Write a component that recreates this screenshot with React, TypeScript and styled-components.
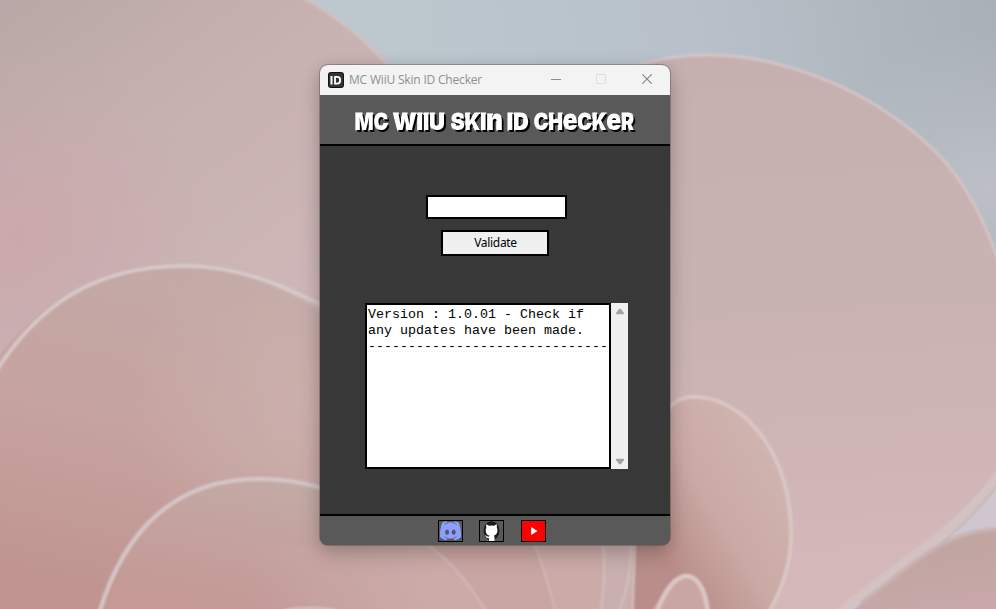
import React from "react";
import styled, { createGlobalStyle } from "styled-components";

const GlobalStyle = createGlobalStyle`
  * { box-sizing: border-box; }
  html, body { margin: 0; padding: 0; overflow: hidden; }
`;

const Desktop = styled.div`
  position: relative;
  width: 996px;
  height: 609px;
  padding: 65px 0 0 320px;
  overflow: hidden;
`;

const WallpaperSvg = styled.svg`
  position: absolute;
  inset: 0;
  display: block;
`;

const Window = styled.main`
  position: relative;
  display: flex;
  flex-direction: column;
  width: 350px;
  height: 480px;
  border-radius: 8px;
  overflow: hidden;
  background: #383838;
`;

const WindowShadow = styled.div`
  position: relative;
  width: 350px;
  height: 480px;
  border-radius: 8px;
  box-shadow: 0 0 0 1px rgba(70, 60, 60, 0.35), 0 9px 22px rgba(0, 0, 0, 0.2), 0 2px 14px rgba(0, 0, 0, 0.1);
`;

const TitleBar = styled.header`
  display: flex;
  align-items: center;
  height: 30px;
  flex: none;
  padding-left: 8px;
  background: #f3f3f3;
`;

const Caption = styled.span`
  flex: 1;
  margin-left: 5px;
  font: 12px/16px "Open Sans", sans-serif;
  letter-spacing: -0.19px;
  color: #8f8f8f;
  white-space: nowrap;
`;

const CaptionButtons = styled.div`
  display: flex;
  align-items: center;
`;

const CaptionButton = styled.button<{ $shift?: number }>`
  display: grid;
  place-items: center;
  width: 46px;
  height: 30px;
  padding: 0 0 2px ${(p) => p.$shift ?? 0}px;
  border: 0;
  background: none;
`;

const Banner = styled.div`
  display: flex;
  justify-content: center;
  height: 51px;
  flex: none;
  padding-top: 10px;
  background: #595959;
  border-bottom: 2px solid #000;
`;

const Heading = styled.h1`
  display: flex;
  width: 280px;
  margin: 0;
  font: 900 23.5px/34px Inter, sans-serif;
  color: #fff;
  -webkit-text-stroke: 1.1px #fff;
  paint-order: stroke fill;
  text-shadow: 1px 1px 0 #000, 2px 2px 0 #000;
`;

const Word = styled.span<{ $w: number; $scale: number }>`
  flex: none;
  width: ${(p) => p.$w}px;
  transform: scaleX(${(p) => p.$scale});
  transform-origin: 0 50%;
  white-space: nowrap;
`;

const Unicase = styled.span`
  font-size: 29px;
  line-height: 20px;
`;

const Body = styled.section`
  display: flex;
  flex-direction: column;
  align-items: center;
  flex: 1;
  padding-top: 49px;
`;

const IdInput = styled.input`
  width: 141px;
  height: 24px;
  margin-left: 3px;
  padding: 0 3px;
  border: 2px solid #000;
  border-radius: 0;
  background: #fff;
  outline: none;
`;

const ValidateButton = styled.button`
  width: 108px;
  height: 26px;
  margin-top: 11px;
  padding: 0 0 1px 1px;
  border: 2px solid #000;
  border-radius: 0;
  background: #f0f0f0;
  color: #000;
  font: 12px/16px "Noto Sans", sans-serif;
  letter-spacing: -0.3px;
`;

const LogArea = styled.div`
  display: flex;
  width: 263px;
  height: 166px;
  margin: 47px 0 0 3px;
`;

const LogText = styled.pre`
  width: 246px;
  margin: 0;
  padding: 2px 0 0 1px;
  border: 2px solid #000;
  background: #fff;
  color: #000;
  font: 13.333px/16px "Liberation Mono", monospace;
`;

const ScrollBar = styled.div`
  display: flex;
  flex-direction: column;
  justify-content: space-between;
  align-items: center;
  width: 17px;
  padding: 5px 0 4px 1px;
  background: #f0f0f0;
`;

const Footer = styled.footer`
  display: flex;
  height: 31px;
  flex: none;
  padding: 4px 0 0 118px;
  background: #595959;
  border-top: 2px solid #000;
`;

const LinkBox = styled.a<{ $gap?: number }>`
  width: 25px;
  height: 22px;
  margin-right: ${(p) => p.$gap ?? 0}px;
  border: 1px solid #000;

  svg { display: block; }
`;

const Wallpaper = () => (
  <WallpaperSvg width="996" height="609" viewBox="0 0 996 609" aria-hidden="true">
    <defs>
      <linearGradient id="sky" gradientUnits="userSpaceOnUse" x1="400" y1="100" x2="996" y2="0">
        <stop offset="0" stopColor="#bcc7ce" />
        <stop offset="0.5" stopColor="#b8c1ca" />
        <stop offset="1" stopColor="#a9b0b6" />
      </linearGradient>
      <radialGradient id="skyGlow" gradientUnits="userSpaceOnUse" cx="985" cy="190" r="160">
        <stop offset="0" stopColor="#bcbfc6" />
        <stop offset="1" stopColor="#bcbfc6" stopOpacity="0" />
      </radialGradient>
      <linearGradient id="leftBack" gradientUnits="userSpaceOnUse" x1="0" y1="0" x2="240" y2="330">
        <stop offset="0" stopColor="#b8a8a6" />
        <stop offset="0.45" stopColor="#c6b1b0" />
        <stop offset="1" stopColor="#cfb6b7" />
      </linearGradient>
      <radialGradient id="rose" gradientUnits="userSpaceOnUse" cx="20" cy="240" r="190">
        <stop offset="0" stopColor="#cca6ab" stopOpacity="0.75" />
        <stop offset="1" stopColor="#cca6ab" stopOpacity="0" />
      </radialGradient>
      <linearGradient id="rightPetal" gradientUnits="userSpaceOnUse" x1="760" y1="60" x2="790" y2="560">
        <stop offset="0" stopColor="#c6b0af" />
        <stop offset="0.5" stopColor="#c9b3b2" />
        <stop offset="1" stopColor="#d4b7b8" />
      </linearGradient>
      <linearGradient id="midPetal" gradientUnits="userSpaceOnUse" x1="210" y1="265" x2="130" y2="609">
        <stop offset="0" stopColor="#c3aaa7" />
        <stop offset="0.5" stopColor="#c6a3a0" />
        <stop offset="1" stopColor="#c09490" />
      </linearGradient>
      <radialGradient id="midLight" gradientUnits="userSpaceOnUse" cx="310" cy="400" r="180">
        <stop offset="0" stopColor="#ccb2ae" stopOpacity="0.8" />
        <stop offset="1" stopColor="#ccb2ae" stopOpacity="0" />
      </radialGradient>
      <linearGradient id="lowPetal" gradientUnits="userSpaceOnUse" x1="260" y1="478" x2="230" y2="609">
        <stop offset="0" stopColor="#c3aaa5" />
        <stop offset="1" stopColor="#c49996" />
      </linearGradient>
      <linearGradient id="frontPetals" gradientUnits="userSpaceOnUse" x1="250" y1="0" x2="430" y2="0">
        <stop offset="0" stopColor="#ccaaa8" stopOpacity="0" />
        <stop offset="1" stopColor="#ccaaa8" />
      </linearGradient>
      <linearGradient id="smallPetal" gradientUnits="userSpaceOnUse" x1="792" y1="470" x2="660" y2="550">
        <stop offset="0" stopColor="#d0b5b1" />
        <stop offset="0.55" stopColor="#cbaaa5" />
        <stop offset="1" stopColor="#b98d89" />
      </linearGradient>
      <linearGradient id="cornerPetal" gradientUnits="userSpaceOnUse" x1="950" y1="530" x2="965" y2="609">
        <stop offset="0" stopColor="#bfa5a2" />
        <stop offset="1" stopColor="#c8a8a8" />
      </linearGradient>
      <filter id="soft" x="-5%" y="-5%" width="110%" height="110%">
        <feGaussianBlur stdDeviation="0.8" />
      </filter>
    </defs>
    <rect width="996" height="609" fill="url(#sky)" />
    <rect width="996" height="609" fill="url(#skyGlow)" />
    <g filter="url(#soft)" strokeLinecap="round">
      <path d="M-5 -5H298C330 10 360 34 395 72V620H-5Z" fill="url(#leftBack)" />
      <rect x="-5" y="20" width="330" height="410" fill="url(#rose)" />
      <path d="M298 -5C332 12 362 36 395 72" fill="none" stroke="#d3c0c0" strokeWidth="3" />

      <path d="M996 465C970 510 940 530 900 558L830 620H1005V460Z" fill="#cfc6cf" />
      <path d="M580 100C630 52 720 48 774 63C850 80 900 118 932 148C965 180 985 220 1000 266V465C965 520 920 542 832 614H580Z" fill="url(#rightPetal)" />
      <path d="M600 87C640 53 710 48 774 63C850 82 900 118 932 148C965 180 985 220 1000 266" fill="none" stroke="#d4c6c8" strokeWidth="2.6" />
      <path d="M1000 474C962 532 916 546 836 614" fill="none" stroke="#d5c1c1" strokeWidth="7" />
      <path d="M1000 482C960 535 930 550 855 614" fill="none" stroke="#c4acaa" strokeWidth="1.3" />
      <path d="M1000 529C960 532 935 546 906 568C885 585 869 597 848 614H1000Z" fill="url(#cornerPetal)" />
      <path d="M1000 529C960 530 935 546 906 568L862 602" fill="none" stroke="#cbb2b0" strokeWidth="4" />

      <path d="M-5 360C38 305 95 266 184 266C245 266 292 292 340 325V620H-5Z" fill="url(#midPetal)" />
      <path d="M-5 360C38 305 95 266 184 266C245 266 292 292 340 325V620H-5Z" fill="url(#midLight)" />
      <path d="M-5 373C38 305 95 266 184 266C245 266 292 290 340 314" fill="none" stroke="#d8cacb" strokeWidth="3.6" />
      <path d="M98 614C125 525 180 479 258 479C290 479 312 484 340 494L640 530V620H98Z" fill="url(#lowPetal)" />
      <rect x="250" y="545" width="390" height="70" fill="url(#frontPetals)" />
      <path d="M99 614C125 525 180 479 258 479C290 479 312 484 340 494" fill="none" stroke="#d6c6c8" strokeWidth="4" />

      <path d="M415 535C448 553 468 579 488 614H558C550 580 542 560 532 535Z" fill="#c9a5a3" />
      <path d="M600 535Q610 575 600 614H625Q642 570 638 535Z" fill="#c9b0ae" />
      <path d="M415 537C446 555 467 580 488 614M531 535C545 570 550 590 556 614" fill="none" stroke="#d3bdbb" strokeWidth="1.8" />
      <path d="M602 535Q607 575 600 614M630 535Q634 577 618 614M636 535L632 614" fill="none" stroke="#d5c2c1" strokeWidth="1.6" />

      <path d="M636 540H660V420C668 403 680 396 698 397C746 400 791 454 791 535C791 568 780 592 767 614H634Z" fill="url(#smallPetal)" />
      <path d="M660 424C668 403 680 396 698 397C746 400 791 454 791 535C791 568 780 592 768 614" fill="none" stroke="#dac8c6" strokeWidth="3.6" />
      <path d="M650 614C665 589 676 576 687 576C699 577 706 592 708 614Z" fill="#c9a6a2" />
      <path d="M656 614C665 589 676 576 687 576C699 577 706 592 708 614" fill="none" stroke="#dbc7c5" strokeWidth="4.5" />
      <path d="M285 610Q310 606 335 610" fill="none" stroke="#d6c6c8" strokeWidth="2" />
    </g>
  </WallpaperSvg>
);

const AppIcon = () => (
  <svg width="16" height="16" viewBox="0 0 16 16" shapeRendering="geometricPrecision">
    <rect width="16" height="16" rx="3" fill="#111" />
    <rect x="1" y="1" width="14" height="14" rx="2" fill="#343434" />
    <path d="M2.5 4h2v8.5h-2z" fill="#fff" />
    <path d="M7 4.9h2.2q3 0 3 3.35T9.2 11.6H7z" fill="none" stroke="#fff" strokeWidth="1.8" />
  </svg>
);

const DiscordIcon = () => (
  <svg width="23" height="20" viewBox="0 0 23 20">
    <path
      fill="#8c9eff"
      d="M7.6.3C5.6.5 4 1.1 3.1 2C1.6 5.6.8 10.9.9 15.8c1.6 1.9 3.7 3.2 6.6 3.5l1.4-2q2.6.5 5.2 0l1.4 2c2.9-.3 5-1.6 6.6-3.5C22.2 10.9 21.4 5.6 19.9 2C19 1.1 17.4.5 15.4.3l-.8 1.1q-3.1-.5-6.2 0z"
    />
    <path d="M5.4 3.3Q7 2.2 9 1.9M17.6 3.3Q16 2.2 14 1.9M5.6 15.7Q7 16.9 9 17.4M17.4 15.7Q16 16.9 14 17.4" fill="none" stroke="#626988" strokeWidth="0.9" />
    <ellipse cx="8.1" cy="11.2" rx="1.9" ry="2.6" fill="#555" />
    <ellipse cx="14.7" cy="11.2" rx="1.9" ry="2.6" fill="#555" />
  </svg>
);

const GitHubIcon = () => (
  <svg width="23" height="20" viewBox="0 0 23 20">
    <ellipse cx="11.5" cy="9.8" rx="8" ry="9.6" fill="#191d21" />
    <path
      fill="#fff"
      d="M6.4 3.3 9 4.8q2.5-.6 5 0l2.6-1.5q.6 1.4.2 3.2c.8 1.3.9 4 0 5.7-.6 1.2-1.6 1.9-2.9 2.2.5.8.6 1.4.6 2.5V20H9v-2.7c-1.8.2-2.6-.5-3.1-1.7l-1-1 1.3-.2c.8.5 1.2 1.5 2.8 1.2q0-.7.4-1.2c-1.5-.3-2.6-1.1-3.2-2.5-.7-1.7-.6-4 .1-5.4q-.4-1.8.1-3.2z"
    />
  </svg>
);

const YouTubeIcon = () => (
  <svg width="23" height="20" viewBox="0 0 23 20">
    <rect x="0" y="0" width="23" height="20" rx="2.5" fill="#f00" />
    <path d="M9.2 6v8l6.2-4z" fill="#fff" />
  </svg>
);

const LOG = `Version : 1.0.01 - Check if
any updates have been made.
------------------------------`;

export default function App() {
  return (
    <>
      <GlobalStyle />
      <Desktop>
        <Wallpaper />
        <WindowShadow>
          <Window>
            <TitleBar>
              <AppIcon />
              <Caption>MC WiiU Skin ID Checker</Caption>
              <CaptionButtons>
                <CaptionButton $shift={2} aria-label="Minimize">
                  <svg width="10" height="10"><path d="M0 5.5H10" stroke="#8c8c8c" /></svg>
                </CaptionButton>
                <CaptionButton aria-label="Maximize">
                  <svg width="10" height="10"><rect x=".5" y=".5" width="9" height="9" rx=".6" fill="none" stroke="#dedede" /></svg>
                </CaptionButton>
                <CaptionButton aria-label="Close">
                  <svg width="10" height="10"><path d="M.2 .2 9.8 9.8M9.8 .2 .2 9.8" stroke="#858585" strokeWidth="1.1" /></svg>
                </CaptionButton>
              </CaptionButtons>
            </TitleBar>
            <Banner>
              <Heading>
                <Word $w={38} $scale={0.83}>MC</Word>
                <Word $w={58} $scale={0.93}>WIIU</Word>
                <Word $w={56} $scale={0.88}>SKI<Unicase>n</Unicase></Word>
                <Word $w={27} $scale={0.92}>ID</Word>
                <Word $w={101} $scale={0.825}>CH<Unicase>e</Unicase>CK<Unicase>e</Unicase>R</Word>
              </Heading>
            </Banner>
            <Body>
              <IdInput aria-label="Skin ID" />
              <ValidateButton>Validate</ValidateButton>
              <LogArea>
                <LogText>{LOG}</LogText>
                <ScrollBar>
                  <svg width="8" height="7" viewBox="0 0 9 7"><path d="M3.6 .5h1.8L8.8 5v1.5H.2V5z" fill="#a3a3a3" /></svg>
                  <svg width="8" height="7" viewBox="0 0 9 7"><path d="M.2 .5h8.6V2L5.4 6.5H3.6L.2 2z" fill="#a3a3a3" /></svg>
                </ScrollBar>
              </LogArea>
            </Body>
            <Footer>
              <LinkBox $gap={16} aria-label="Discord"><DiscordIcon /></LinkBox>
              <LinkBox $gap={17} aria-label="GitHub"><GitHubIcon /></LinkBox>
              <LinkBox aria-label="YouTube"><YouTubeIcon /></LinkBox>
            </Footer>
          </Window>
        </WindowShadow>
      </Desktop>
    </>
  );
}
